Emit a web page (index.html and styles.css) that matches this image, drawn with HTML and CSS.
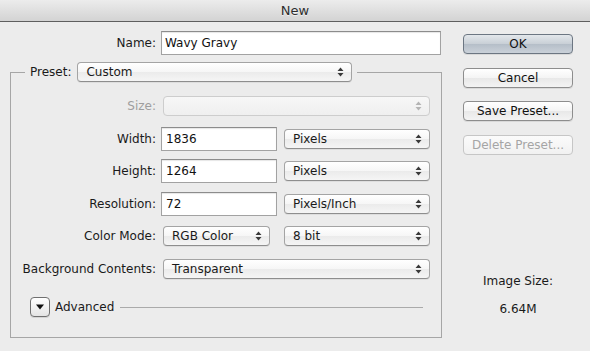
FILE: index.html
```html
<!DOCTYPE html>
<html lang="en">

<head>
    <meta charset="UTF-8" />
    <meta name="viewport" content="width=device-width, initial-scale=1.0" />
    <title>New</title>
    <link rel="stylesheet" href="styles.css">
</head>

<body>
    <div class="titlebar">New</div>

    <div class="dialog">
        <div class="main">
            <div class="name-row">
                <label for="name">Name:</label>
                <input type="text" id="name" class="field name-field" value="Wavy Gravy" />
            </div>

            <fieldset class="preset-box">
                <legend>
                    <span class="legend-label">Preset:</span>
                    <div class="popup preset-popup">
                        <span>Custom</span>
                        <svg class="arrows" width="7" height="10" viewBox="0 0 7 10"><path d="M0.5 4 L3.5 0.5 L6.5 4 Z M0.5 6 L3.5 9.5 L6.5 6 Z" /></svg>
                    </div>
                </legend>

                <div class="row">
                    <label class="disabled">Size:</label>
                    <div class="popup popup-wide popup-disabled">
                        <span></span>
                        <svg class="arrows" width="7" height="10" viewBox="0 0 7 10"><path d="M0.5 4 L3.5 0.5 L6.5 4 Z M0.5 6 L3.5 9.5 L6.5 6 Z" /></svg>
                    </div>
                </div>

                <div class="row">
                    <label for="width">Width:</label>
                    <input type="text" id="width" class="field short-field" value="1836" />
                    <div class="popup popup-unit">
                        <span>Pixels</span>
                        <svg class="arrows" width="7" height="10" viewBox="0 0 7 10"><path d="M0.5 4 L3.5 0.5 L6.5 4 Z M0.5 6 L3.5 9.5 L6.5 6 Z" /></svg>
                    </div>
                </div>

                <div class="row">
                    <label for="height">Height:</label>
                    <input type="text" id="height" class="field short-field" value="1264" />
                    <div class="popup popup-unit">
                        <span>Pixels</span>
                        <svg class="arrows" width="7" height="10" viewBox="0 0 7 10"><path d="M0.5 4 L3.5 0.5 L6.5 4 Z M0.5 6 L3.5 9.5 L6.5 6 Z" /></svg>
                    </div>
                </div>

                <div class="row">
                    <label for="resolution">Resolution:</label>
                    <input type="text" id="resolution" class="field short-field" value="72" />
                    <div class="popup popup-unit">
                        <span>Pixels/Inch</span>
                        <svg class="arrows" width="7" height="10" viewBox="0 0 7 10"><path d="M0.5 4 L3.5 0.5 L6.5 4 Z M0.5 6 L3.5 9.5 L6.5 6 Z" /></svg>
                    </div>
                </div>

                <div class="row">
                    <label>Color Mode:</label>
                    <div class="popup popup-mode">
                        <span>RGB Color</span>
                        <svg class="arrows" width="7" height="10" viewBox="0 0 7 10"><path d="M0.5 4 L3.5 0.5 L6.5 4 Z M0.5 6 L3.5 9.5 L6.5 6 Z" /></svg>
                    </div>
                    <div class="popup popup-bits">
                        <span>8 bit</span>
                        <svg class="arrows" width="7" height="10" viewBox="0 0 7 10"><path d="M0.5 4 L3.5 0.5 L6.5 4 Z M0.5 6 L3.5 9.5 L6.5 6 Z" /></svg>
                    </div>
                </div>

                <div class="row">
                    <label>Background Contents:</label>
                    <div class="popup popup-wide">
                        <span>Transparent</span>
                        <svg class="arrows" width="7" height="10" viewBox="0 0 7 10"><path d="M0.5 4 L3.5 0.5 L6.5 4 Z M0.5 6 L3.5 9.5 L6.5 6 Z" /></svg>
                    </div>
                </div>

                <div class="advanced">
                    <button type="button" class="disclosure">
                        <svg width="8" height="6" viewBox="0 0 8 6"><path d="M0 0.5 L8 0.5 L4 5.5 Z" /></svg>
                    </button>
                    <span class="advanced-label">Advanced</span>
                    <span class="rule"></span>
                </div>
            </fieldset>
        </div>

        <div class="side">
            <button type="button" class="btn btn-default">OK</button>
            <button type="button" class="btn">Cancel</button>
            <button type="button" class="btn">Save Preset...</button>
            <button type="button" class="btn" disabled>Delete Preset...</button>

            <div class="image-size">
                <div>Image Size:</div>
                <div class="image-size-value">6.64M</div>
            </div>
        </div>
    </div>
</body>

</html>
```

FILE: styles.css
```css
body {
    margin: 0;
    width: 590px;
    height: 351px;
    overflow: hidden;
    background-color: #ececec;
    font-family: "DejaVu Sans", "Liberation Sans", sans-serif;
    font-size: 12px;
    color: #1a1a1a;
}

.titlebar {
    height: 21px;
    line-height: 21px;
    text-align: center;
    font-size: 13px;
    color: #2e2e2e;
    text-shadow: 0 1px 0 rgba(255, 255, 255, 0.6);
    background: linear-gradient(#ececec, #d3d3d3);
    border-bottom: 1px solid #5f5f5f;
}

.dialog {
    display: flex;
    padding: 9px 0 0 10px;
}

.main {
    width: 432px;
    flex-shrink: 0;
}

.name-row {
    display: flex;
    align-items: center;
    height: 24px;
}

.name-row label {
    width: 146px;
    margin-right: 5px;
    text-align: right;
}

.field {
    height: 24px;
    box-sizing: border-box;
    margin: 0;
    padding: 0 4px;
    border: 1px solid #a2a2a2;
    border-top-color: #8c8c8c;
    background-color: #fff;
    box-shadow: inset 0 1px 1px rgba(0, 0, 0, 0.1);
    font: inherit;
    color: #111;
    outline: none;
}

.name-field {
    width: 280px;
    padding-left: 3px;
}

.short-field {
    width: 116px;
    flex-shrink: 0;
}

.preset-box {
    box-sizing: border-box;
    width: 432px;
    min-width: 0;
    margin: 7px 0 0;
    padding: 8px 11px 20px 0;
    border: 1px solid #a6a6a6;
}

.preset-box legend {
    display: flex;
    align-items: center;
    margin-left: 14px;
    padding: 0 5px;
}

.legend-label {
    margin-right: 6px;
}

.popup {
    display: flex;
    align-items: center;
    justify-content: space-between;
    flex-shrink: 0;
    height: 20px;
    box-sizing: border-box;
    padding: 0 7px 0 8px;
    border: 1px solid #a4a4a4;
    border-bottom-color: #8e8e8e;
    border-radius: 4px;
    background: linear-gradient(#ffffff, #f6f6f6 50%, #ebebeb 51%, #f5f5f5);
    box-shadow: 0 1px 0 rgba(0, 0, 0, 0.06);
    white-space: nowrap;
}

.arrows {
    fill: #3a3a3a;
    flex-shrink: 0;
}

.preset-popup {
    width: 275px;
}

.popup-wide {
    width: 267px;
    margin-left: 2px;
}

.popup-unit {
    width: 146px;
    margin-left: 7px;
}

.popup-mode {
    width: 107px;
    margin-left: 2px;
}

.popup-bits {
    width: 146px;
    margin-left: 14px;
}

.popup-disabled {
    border-color: #cdcdcd;
    background: linear-gradient(#f7f7f7, #efefef);
    box-shadow: none;
}

.popup-disabled .arrows {
    fill: #b4b4b4;
}

.row {
    display: flex;
    align-items: center;
    height: 32.5px;
}

.row label {
    width: 145px;
    flex-shrink: 0;
    margin-right: 5px;
    text-align: right;
    white-space: nowrap;
}

.row label.disabled {
    color: #9e9e9e;
}

.advanced {
    display: flex;
    align-items: center;
    height: 20px;
    margin: 12px 7px 0 19px;
}

.disclosure {
    width: 20px;
    height: 20px;
    box-sizing: border-box;
    display: flex;
    align-items: center;
    justify-content: center;
    padding: 0;
    border: 1px solid #707070;
    border-radius: 4px;
    background: linear-gradient(#ffffff, #e4e4e4);
    box-shadow: 0 1px 0 rgba(0, 0, 0, 0.1);
}

.disclosure svg {
    fill: #111;
}

.advanced-label {
    margin-left: 5px;
}

.rule {
    flex: 1;
    height: 1px;
    margin-left: 6px;
    background-color: #aaaaaa;
}

.side {
    display: flex;
    flex-direction: column;
    gap: 13.5px;
    width: 110px;
    margin-left: 21px;
    padding-top: 3px;
}

.btn {
    width: 110px;
    height: 20px;
    box-sizing: border-box;
    padding: 0;
    border: 1px solid #8d8d8d;
    border-radius: 4px;
    background: linear-gradient(#ffffff, #f4f4f4 50%, #e8e8e8 51%, #f3f3f3);
    box-shadow: 0 1px 0 rgba(0, 0, 0, 0.08);
    font: inherit;
    color: #111;
}

.btn-default {
    border-color: #6c7682;
    background: linear-gradient(#e3e7eb, #c8cfd6 50%, #b5bec8 51%, #cad1d9);
}

.btn:disabled {
    color: #a5a5a5;
    border-color: #c6c6c6;
    background: linear-gradient(#fbfbfb, #f1f1f1);
    box-shadow: none;
}

.image-size {
    margin-top: 105px;
    text-align: center;
    line-height: 16px;
}

.image-size-value {
    margin-top: 12px;
}
```
